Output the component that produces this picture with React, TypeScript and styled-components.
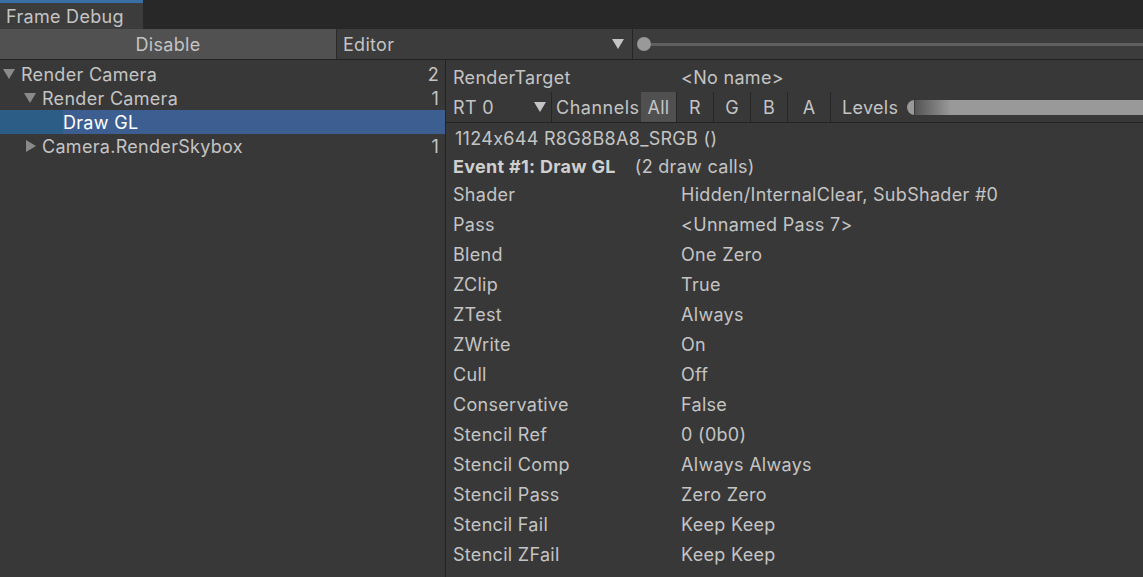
import styled, { createGlobalStyle } from 'styled-components';

const GlobalStyle = createGlobalStyle`
  body {
    margin: 0;
    background: #383838;
    font-family: Inter, 'Noto Sans', sans-serif;
    font-size: 18px;
    letter-spacing: 0.3px;
    font-feature-settings: 'calt' 0;
    color: #c4c4c4;
  }
`;

const treeItems = [
  { label: 'Render Camera', depth: 0, count: '2', arrow: 'down' },
  { label: 'Render Camera', depth: 1, count: '1', arrow: 'down' },
  { label: 'Draw GL', depth: 2, count: '', arrow: '', selected: true },
  { label: 'Camera.RenderSkybox', depth: 1, count: '1', arrow: 'right' },
];

const props = [
  ['Shader', 'Hidden/InternalClear, SubShader #0'],
  ['Pass', '<Unnamed Pass 7>'],
  ['Blend', 'One Zero'],
  ['ZClip', 'True'],
  ['ZTest', 'Always'],
  ['ZWrite', 'On'],
  ['Cull', 'Off'],
  ['Conservative', 'False'],
  ['Stencil Ref', '0 (0b0)'],
  ['Stencil Comp', 'Always Always'],
  ['Stencil Pass', 'Zero Zero'],
  ['Stencil Fail', 'Keep Keep'],
  ['Stencil ZFail', 'Keep Keep'],
];

function Triangle({ dir, color = '#8a8a8a' }: { dir: string; color?: string }) {
  if (dir === 'down') {
    return (
      <svg width="12" height="10" viewBox="0 0 12 10">
        <path d="M0 0 L12 0 L6 10 Z" fill={color} />
      </svg>
    );
  }
  return (
    <svg width="10" height="12" viewBox="0 0 10 12">
      <path d="M0 0 L10 6 L0 12 Z" fill={color} />
    </svg>
  );
}

export default function App() {
  return (
    <>
      <GlobalStyle />
      <Window>
        <TabStrip>
          <Tab>Frame Debug</Tab>
        </TabStrip>
        <Toolbar>
          <DisableButton>Disable</DisableButton>
          <Dropdown>
            <span>Editor</span>
            <Triangle dir="down" color="#c4c4c4" />
          </Dropdown>
          <EventSlider>
            <Knob />
            <Track />
          </EventSlider>
        </Toolbar>
        <Body>
          <TreePanel>
            {treeItems.map((item, i) => (
              <TreeRow key={i} $selected={!!item.selected}>
                <Indent $depth={item.depth}>
                  {item.arrow && <Triangle dir={item.arrow} />}
                </Indent>
                <TreeLabel>{item.label}</TreeLabel>
                <Count>{item.count}</Count>
              </TreeRow>
            ))}
          </TreePanel>
          <Details>
            <PropRow $height={29}>
              <PropLabel>RenderTarget</PropLabel>
              <span>&lt;No name&gt;</span>
            </PropRow>
            <ChannelBar>
              <RtSelect>
                <span>RT 0</span>
                <Triangle dir="down" color="#c4c4c4" />
              </RtSelect>
              <ChannelsLabel>Channels</ChannelsLabel>
              <ChannelButton $active $width={36}>All</ChannelButton>
              <ChannelButton $width={37}>R</ChannelButton>
              <ChannelButton $width={37}>G</ChannelButton>
              <ChannelButton $width={37}>B</ChannelButton>
              <ChannelButton $width={43}>A</ChannelButton>
              <LevelsLabel>Levels</LevelsLabel>
              <LevelsKnob />
              <LevelsBar />
            </ChannelBar>
            <InfoLine>1124x644 R8G8B8A8_SRGB ()</InfoLine>
            <EventLine>
              <b>Event #1: Draw GL</b>
              <span>(2 draw calls)</span>
            </EventLine>
            {props.map(([k, v]) => (
              <PropRow key={k} $height={30}>
                <PropLabel>{k}</PropLabel>
                <span>{v}</span>
              </PropRow>
            ))}
          </Details>
        </Body>
      </Window>
    </>
  );
}

const Window = styled.div`
  width: 1143px;
  height: 577px;
  display: flex;
  flex-direction: column;
  overflow: hidden;
`;

const TabStrip = styled.div`
  height: 29px;
  background: #282828;
  display: flex;
  flex-shrink: 0;
`;

const Tab = styled.div`
  width: 137px;
  padding-left: 6px;
  background: #3c3c3c;
  border-top: 3px solid #3a6fa5;
  display: flex;
  align-items: center;
`;

const Toolbar = styled.div`
  height: 30px;
  display: flex;
  background: #3c3c3c;
  border-bottom: 1px solid #232323;
  flex-shrink: 0;
`;

const DisableButton = styled.div`
  width: 336px;
  background: #515151;
  border-right: 1px solid #2a2a2a;
  display: flex;
  align-items: center;
  justify-content: center;
`;

const Dropdown = styled.div`
  width: 296px;
  padding: 0 8px 0 6px;
  box-sizing: border-box;
  border-right: 1px solid #262626;
  display: flex;
  align-items: center;
  justify-content: space-between;
`;

const EventSlider = styled.div`
  flex: 1;
  display: flex;
  align-items: center;
  padding-left: 4px;
`;

const Knob = styled.div`
  width: 14px;
  height: 14px;
  border-radius: 50%;
  background: #999999;
  flex-shrink: 0;
`;

const Track = styled.div`
  flex: 1;
  height: 3px;
  background: #5f5f5f;
`;

const Body = styled.div`
  flex: 1;
  display: flex;
`;

const TreePanel = styled.div`
  width: 445px;
  border-right: 1px solid #232323;
  padding-top: 2px;
`;

const TreeRow = styled.div<{ $selected: boolean }>`
  height: 24px;
  display: flex;
  align-items: center;
  padding-right: 6px;
  background: ${({ $selected }) =>
    $selected ? 'linear-gradient(to right, #2c5d87 63px, #3d5e90 63px)' : 'transparent'};
  color: ${({ $selected }) => ($selected ? '#ffffff' : '#c4c4c4')};
`;

const Indent = styled.div<{ $depth: number }>`
  width: ${({ $depth }) => 21 + $depth * 21}px;
  flex-shrink: 0;
  display: flex;
  align-items: center;
  justify-content: flex-end;
  padding-right: 6px;
  box-sizing: border-box;
`;

const TreeLabel = styled.span`
  flex: 1;
`;

const Count = styled.span``;

const Details = styled.div`
  flex: 1;
  padding-top: 3px;
`;

const PropRow = styled.div<{ $height: number }>`
  height: ${({ $height }) => $height}px;
  display: flex;
  align-items: center;
  padding-left: 7px;
`;

const PropLabel = styled.span`
  width: 228px;
`;

const ChannelBar = styled.div`
  height: 30px;
  display: flex;
  align-items: stretch;
  border-bottom: 1px solid #232323;
`;

const RtSelect = styled.div`
  width: 106px;
  padding: 0 5px 0 7px;
  box-sizing: border-box;
  border-right: 1px solid #262626;
  display: flex;
  align-items: center;
  justify-content: space-between;
`;

const ChannelsLabel = styled.div`
  width: 89px;
  padding-left: 4px;
  box-sizing: border-box;
  display: flex;
  align-items: center;
  letter-spacing: 0.5px;
`;

const ChannelButton = styled.div<{ $active?: boolean; $width: number }>`
  width: ${({ $width }) => $width}px;
  box-sizing: border-box;
  border-right: 1px solid #262626;
  background: ${({ $active }) => ($active ? '#505050' : 'transparent')};
  display: flex;
  align-items: center;
  justify-content: center;
`;

const LevelsLabel = styled.div`
  padding-left: 11px;
  width: 76px;
  box-sizing: border-box;
  display: flex;
  align-items: center;
`;

const LevelsKnob = styled.div`
  align-self: center;
  width: 7px;
  height: 15px;
  border-radius: 8px 0 0 8px;
  background: #999999;
  border-right: 1px solid #3a3a3a;
`;

const LevelsBar = styled.div`
  flex: 1;
  align-self: center;
  height: 15px;
  background: linear-gradient(to right, #555555, #999999 36px);
`;

const InfoLine = styled.div`
  height: 30px;
  display: flex;
  align-items: center;
  padding-left: 9px;
`;

const EventLine = styled.div`
  height: 26px;
  display: flex;
  align-items: center;
  padding-left: 7px;
  gap: 19px;
  b {
    font-weight: 700;
    color: #cfcfcf;
  }
`;
